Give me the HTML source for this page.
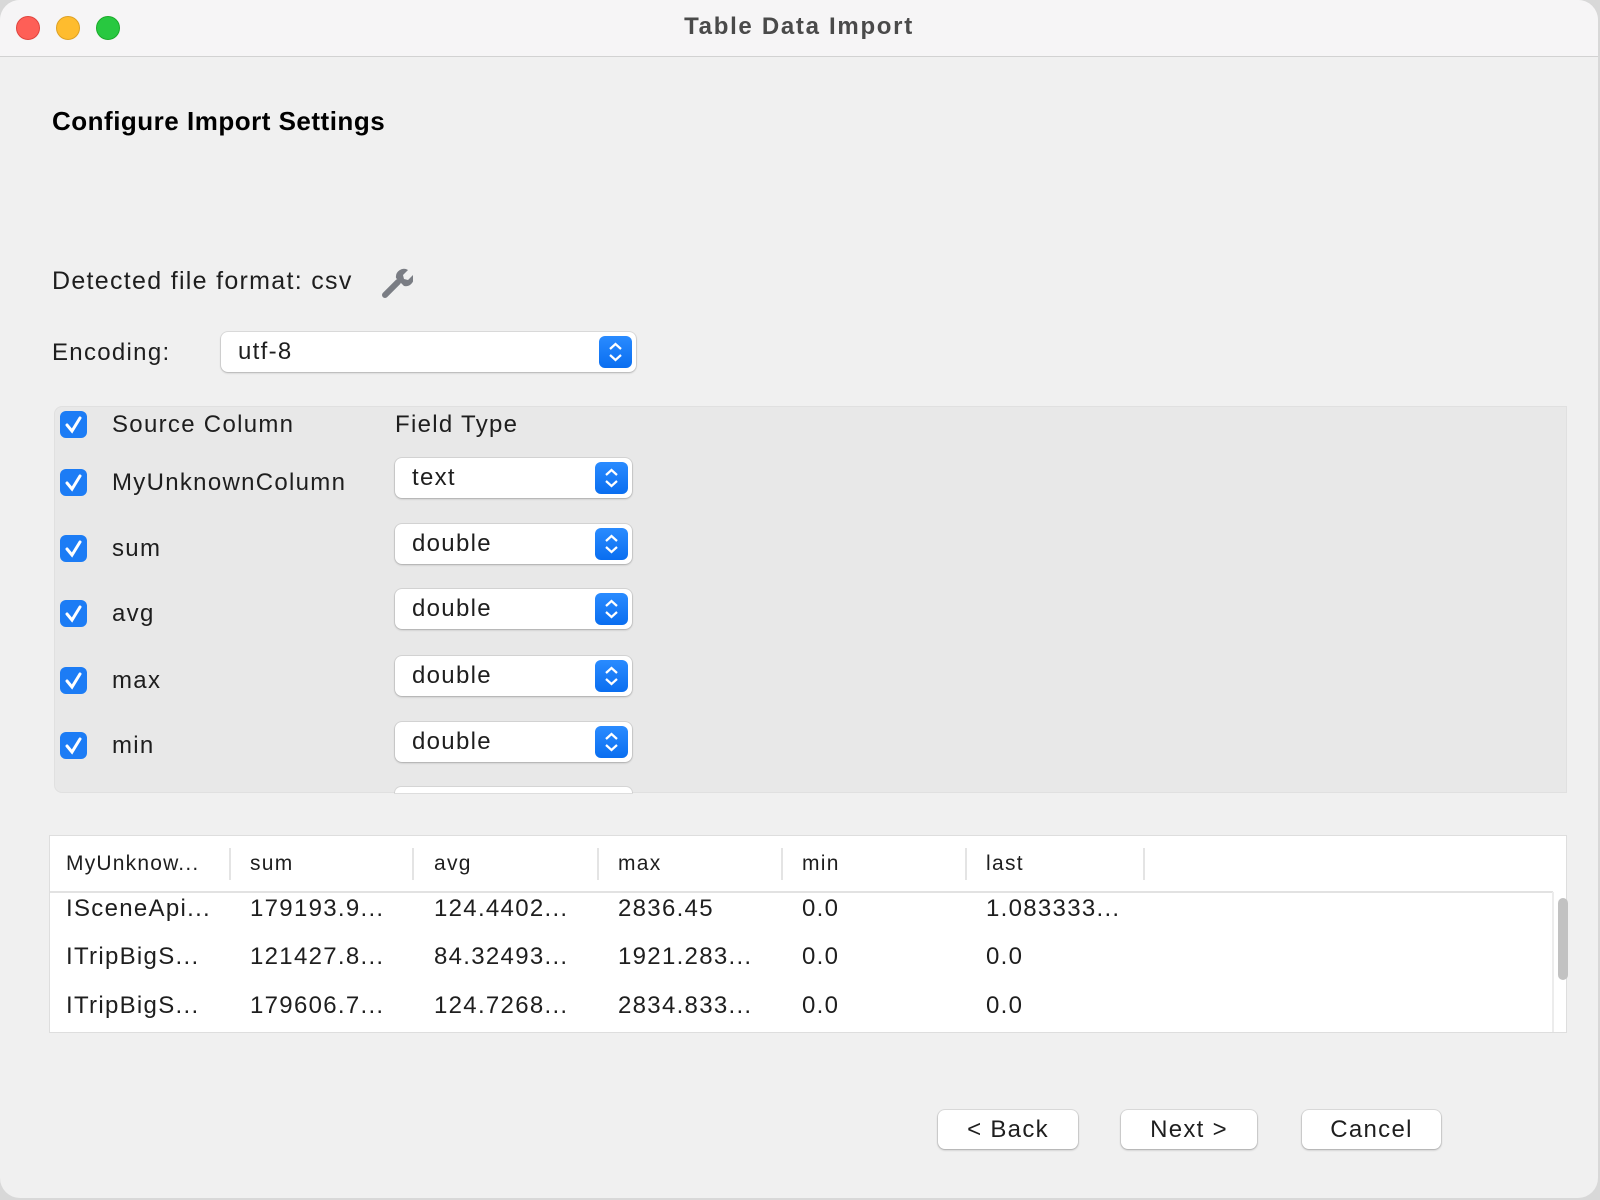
<!DOCTYPE html>
<html><head><meta charset="utf-8"><style>
*{margin:0;padding:0;box-sizing:border-box}
body{width:1600px;height:1200px;background:#d8d8d8;font-family:"Liberation Sans",sans-serif;color:#1e1e1e;position:relative;overflow:hidden}
.win{position:absolute;left:0;top:0;width:1598px;height:1198px;background:#f0f0f0;border-radius:20px;overflow:hidden}
.tb{position:absolute;left:0;top:0;width:100%;height:57px;background:#f6f5f6;border-bottom:1px solid #d2d2d2}
.dot{position:absolute;top:16px;width:24px;height:24px;border-radius:50%}
.t{position:absolute;white-space:nowrap;letter-spacing:1.3px}
.combo{position:absolute;background:#fff;border-radius:7px;box-shadow:0 0 0 1px rgba(0,0,0,.08),0 1px 2px rgba(0,0,0,.2);font-size:24px;padding-left:17px;line-height:40px;letter-spacing:1.3px}
.step{position:absolute;right:4px;top:4px;width:33px;height:32px;border-radius:6px;background:linear-gradient(#2a8bff,#0a6ef0)}
.cb{position:absolute;left:60px;width:27px;height:27px;border-radius:6px;background:#1c7cf5}
.panel{position:absolute;left:54px;top:406px;width:1513px;height:387px;background:#e8e8e8;border-radius:8px 0 0 8px;border:1px solid #e0e0e0;overflow:hidden}
.tbl{position:absolute;left:49px;top:835px;width:1518px;height:198px;background:#fff;border:1px solid #dedede}
.sep{position:absolute;top:12px;width:2px;height:32px;background:#e4e4e4}
.btn{position:absolute;top:1110px;height:39px;background:#fff;border-radius:7px;box-shadow:0 0 0 1px rgba(0,0,0,.08),0 1px 2px rgba(0,0,0,.25);font-size:24px;text-align:center;line-height:39px;letter-spacing:1.3px}
</style></head><body>
<div class="win">
<div class="tb">
<div class="dot" style="left:16px;background:#fe5f57;border:1px solid #e0443e"></div>
<div class="dot" style="left:56px;background:#febc2e;border:1px solid #dea123"></div>
<div class="dot" style="left:96px;background:#28c840;border:1px solid #1aab29"></div>
<div class="t" style="left:0;width:1598px;text-align:center;top:13px;font-size:24px;font-weight:bold;color:#4a4a4a;letter-spacing:1.7px">Table Data Import</div>
</div>
<div class="t" style="left:52px;top:106px;font-size:26px;font-weight:bold;color:#000;letter-spacing:0.5px">Configure Import Settings</div>
<div class="t" style="left:52px;top:267px;font-size:25px">Detected file format: csv</div>
<svg style="position:absolute;left:379px;top:266px" width="34" height="34" viewBox="0 0 34 34"><path d="M6 29 L19 16" stroke="#7a7d84" stroke-width="6" stroke-linecap="round"/><path d="M17 12 a8 8 0 0 1 12 -8 l-5 5 1 4 4 1 5 -5 a8 8 0 0 1 -9 11 z" fill="#7a7d84"/></svg>
<div class="t" style="left:52px;top:339px;font-size:24px">Encoding:</div>
<div class="combo" style="left:221px;top:332px;width:415px">utf-8<div class="step"><svg width="33" height="32"><path d="M11 13l5.5-5 5.5 5M11 19l5.5 5 5.5-5" stroke="#fff" stroke-width="2.2" fill="none"/></svg></div></div>
<div class="panel"></div>
<div class="t" style="left:112px;top:411px;font-size:24px">Source Column</div>
<div class="t" style="left:395px;top:411px;font-size:24px">Field Type</div>
<div class="cb" style="top:411px"><svg width="27" height="27"><path d="M7 14l5 6 8-13" stroke="#fff" stroke-width="3" fill="none" stroke-linecap="round"/></svg></div>
<div class="cb" style="top:469px"><svg width="27" height="27"><path d="M7 14l5 6 8-13" stroke="#fff" stroke-width="3" fill="none" stroke-linecap="round"/></svg></div>
<div class="t" style="left:112px;top:469px;font-size:24px">MyUnknownColumn</div>
<div class="cb" style="top:535px"><svg width="27" height="27"><path d="M7 14l5 6 8-13" stroke="#fff" stroke-width="3" fill="none" stroke-linecap="round"/></svg></div>
<div class="t" style="left:112px;top:535px;font-size:24px">sum</div>
<div class="cb" style="top:600px"><svg width="27" height="27"><path d="M7 14l5 6 8-13" stroke="#fff" stroke-width="3" fill="none" stroke-linecap="round"/></svg></div>
<div class="t" style="left:112px;top:600px;font-size:24px">avg</div>
<div class="cb" style="top:667px"><svg width="27" height="27"><path d="M7 14l5 6 8-13" stroke="#fff" stroke-width="3" fill="none" stroke-linecap="round"/></svg></div>
<div class="t" style="left:112px;top:667px;font-size:24px">max</div>
<div class="cb" style="top:732px"><svg width="27" height="27"><path d="M7 14l5 6 8-13" stroke="#fff" stroke-width="3" fill="none" stroke-linecap="round"/></svg></div>
<div class="t" style="left:112px;top:732px;font-size:24px">min</div>
<div class="combo" style="left:395px;top:458px;width:237px">text<div class="step"><svg width="33" height="32"><path d="M11 13l5.5-5 5.5 5M11 19l5.5 5 5.5-5" stroke="#fff" stroke-width="2.2" fill="none"/></svg></div></div>
<div class="combo" style="left:395px;top:524px;width:237px">double<div class="step"><svg width="33" height="32"><path d="M11 13l5.5-5 5.5 5M11 19l5.5 5 5.5-5" stroke="#fff" stroke-width="2.2" fill="none"/></svg></div></div>
<div class="combo" style="left:395px;top:589px;width:237px">double<div class="step"><svg width="33" height="32"><path d="M11 13l5.5-5 5.5 5M11 19l5.5 5 5.5-5" stroke="#fff" stroke-width="2.2" fill="none"/></svg></div></div>
<div class="combo" style="left:395px;top:656px;width:237px">double<div class="step"><svg width="33" height="32"><path d="M11 13l5.5-5 5.5 5M11 19l5.5 5 5.5-5" stroke="#fff" stroke-width="2.2" fill="none"/></svg></div></div>
<div class="combo" style="left:395px;top:722px;width:237px">double<div class="step"><svg width="33" height="32"><path d="M11 13l5.5-5 5.5 5M11 19l5.5 5 5.5-5" stroke="#fff" stroke-width="2.2" fill="none"/></svg></div></div>
<div style="position:absolute;left:395px;top:787px;width:237px;height:6px;background:#fff;border-radius:7px 7px 0 0;box-shadow:0 0 0 1px rgba(0,0,0,.08)"></div>
<div class="tbl">
<div style="position:absolute;left:0;top:55px;width:1503px;height:2px;background:#e2e2e2"></div>
<div style="position:absolute;left:1502px;top:56px;width:2px;height:140px;background:#ececec"></div>
<div style="position:absolute;left:1508px;top:62px;width:10px;height:82px;border-radius:5px;background:#c2c2c2"></div>
<div class="sep" style="left:179px"></div><div class="sep" style="left:362px"></div><div class="sep" style="left:547px"></div><div class="sep" style="left:731px"></div><div class="sep" style="left:915px"></div><div class="sep" style="left:1093px"></div>
</div>
<div style="font-size:21px">
<div class="t" style="left:66px;top:852px;letter-spacing:1.2px">MyUnknow...</div><div class="t" style="left:250px;top:852px">sum</div><div class="t" style="left:434px;top:852px">avg</div><div class="t" style="left:618px;top:852px">max</div><div class="t" style="left:802px;top:852px">min</div><div class="t" style="left:986px;top:852px">last</div>
</div>
<div style="font-size:24px">
<div class="t" style="left:66px;top:895px">ISceneApi...</div><div class="t" style="left:250px;top:895px">179193.9...</div><div class="t" style="left:434px;top:895px">124.4402...</div><div class="t" style="left:618px;top:895px">2836.45</div><div class="t" style="left:802px;top:895px">0.0</div><div class="t" style="left:986px;top:895px">1.083333...</div>
<div class="t" style="left:66px;top:943px">ITripBigS...</div><div class="t" style="left:250px;top:943px">121427.8...</div><div class="t" style="left:434px;top:943px">84.32493...</div><div class="t" style="left:618px;top:943px">1921.283...</div><div class="t" style="left:802px;top:943px">0.0</div><div class="t" style="left:986px;top:943px">0.0</div>
<div class="t" style="left:66px;top:992px">ITripBigS...</div><div class="t" style="left:250px;top:992px">179606.7...</div><div class="t" style="left:434px;top:992px">124.7268...</div><div class="t" style="left:618px;top:992px">2834.833...</div><div class="t" style="left:802px;top:992px">0.0</div><div class="t" style="left:986px;top:992px">0.0</div>
</div>
<div class="btn" style="left:938px;width:140px">&lt; Back</div>
<div class="btn" style="left:1121px;width:136px">Next &gt;</div>
<div class="btn" style="left:1302px;width:139px">Cancel</div>
</div>
</body></html>
